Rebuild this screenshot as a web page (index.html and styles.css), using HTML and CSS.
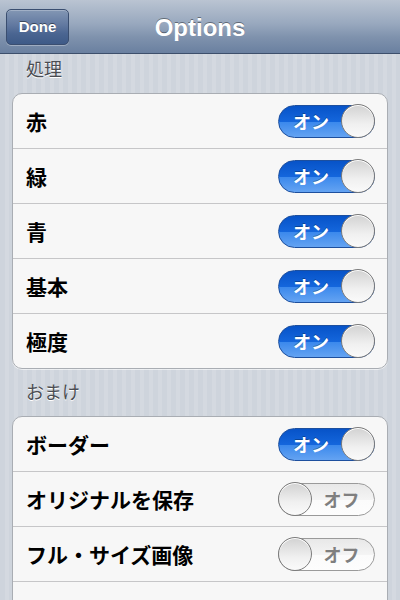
FILE: index.html
```html
<!DOCTYPE html>
<html lang="ja">
<head>
    <meta charset="UTF-8">
    <meta name="viewport" content="width=device-width, initial-scale=1.0">
    <title>Options</title>
    <link rel="stylesheet" href="styles.css">
</head>
<body>
    <header class="navbar">
        <div class="nav-left">
            <button class="nav-btn">Done</button>
        </div>
        <h1 class="nav-title">Options</h1>
        <div class="nav-right"></div>
    </header>

    <main class="settings">
        <section class="section">
            <h2 class="section-title">処理</h2>
            <ul class="group">
                <li class="row">
                    <span class="row-label">赤</span>
                    <span class="switch on"><span class="switch-text">オン</span><span class="knob"></span></span>
                </li>
                <li class="row">
                    <span class="row-label">緑</span>
                    <span class="switch on"><span class="switch-text">オン</span><span class="knob"></span></span>
                </li>
                <li class="row">
                    <span class="row-label">青</span>
                    <span class="switch on"><span class="switch-text">オン</span><span class="knob"></span></span>
                </li>
                <li class="row">
                    <span class="row-label">基本</span>
                    <span class="switch on"><span class="switch-text">オン</span><span class="knob"></span></span>
                </li>
                <li class="row">
                    <span class="row-label">極度</span>
                    <span class="switch on"><span class="switch-text">オン</span><span class="knob"></span></span>
                </li>
            </ul>
        </section>

        <section class="section">
            <h2 class="section-title">おまけ</h2>
            <ul class="group">
                <li class="row">
                    <span class="row-label">ボーダー</span>
                    <span class="switch on"><span class="switch-text">オン</span><span class="knob"></span></span>
                </li>
                <li class="row">
                    <span class="row-label">オリジナルを保存</span>
                    <span class="switch off"><span class="switch-text">オフ</span><span class="knob"></span></span>
                </li>
                <li class="row">
                    <span class="row-label">フル・サイズ画像</span>
                    <span class="switch off"><span class="switch-text">オフ</span><span class="knob"></span></span>
                </li>
                <li class="row">
                    <span class="row-label">その他のアプリ</span>
                </li>
            </ul>
        </section>
    </main>
</body>
</html>
```

FILE: styles.css
```css
body, html {
    margin: 0;
    height: 100%;
    overflow: hidden;
    font-family: "Liberation Sans", "Noto Sans CJK JP", sans-serif;
    background-color: #d0d5dd;
    background-image: repeating-linear-gradient(90deg, #ced4dc 0, #ced4dc 5px, #d4d9e0 5px, #d4d9e0 9px);
}

/* ナビゲーションバー */
.navbar {
    display: grid;
    grid-template-columns: 1fr auto 1fr;
    align-items: center;
    height: 53px;
    padding: 0 6px;
    border-bottom: 1px solid #3d4f6b;
    background: linear-gradient(#bac4d2 0%, #98a8be 45%, #7f92ad 70%, #6a80a0 100%);
}
.nav-btn {
    width: 63px;
    height: 36px;
    padding: 0;
    font-family: inherit;
    font-size: 15px;
    font-weight: bold;
    color: #fff;
    text-shadow: 0 -1px 0 rgba(0, 0, 0, 0.45);
    border: 1px solid #3a4e70;
    border-radius: 5px;
    background: linear-gradient(#8397b4 0%, #6178a0 45%, #4a6591 70%, #3e5a87 100%);
    box-shadow: 0 1px 0 rgba(255, 255, 255, 0.3), inset 0 1px 0 rgba(255, 255, 255, 0.25);
}
.nav-title {
    margin: 3px 0 0;
    font-size: 24px;
    font-weight: bold;
    color: #fff;
    text-shadow: 0 -1px 0 rgba(0, 0, 0, 0.4);
}

/* 設定グループ */
.settings {
    padding: 0 12px;
}
.section + .section {
    margin-top: 8px;
}
.section-title {
    margin: 0;
    padding: 2px 14px 9px;
    line-height: 28px;
    font-size: 18px;
    font-weight: normal;
    color: #4a4c52;
    text-shadow: 0 1px 0 #fff;
}
.group {
    list-style: none;
    margin: 0;
    padding: 0;
    background: #f7f7f7;
    border: 1px solid #a9adb3;
    border-radius: 10px;
    box-shadow: 0 1px 0 rgba(255, 255, 255, 0.6);
}
.row {
    display: flex;
    align-items: center;
    justify-content: space-between;
    height: 54px;
    padding: 0 12px 0 13px;
}
.row + .row {
    border-top: 1px solid #c6c6c8;
}
.row-label {
    font-size: 21px;
    font-weight: bold;
    color: #000;
}

/* スイッチ */
.switch {
    display: flex;
    align-items: center;
    box-sizing: border-box;
    width: 97px;
    height: 33px;
    border-radius: 17px;
    border: 1px solid #9a9a9a;
}
.switch.on {
    border-color: #1d4f9e;
    background: linear-gradient(#0753c8 0%, #1466dc 50%, #3a88ec 51%, #64a3f2 100%);
}
.switch.off {
    flex-direction: row-reverse;
    background: linear-gradient(#e8e8e8 0%, #f4f4f4 50%, #fbfbfb 51%, #fdfdfd 100%);
}
.switch-text {
    flex: 1;
    text-align: center;
    font-size: 18px;
    font-weight: bold;
}
.on .switch-text {
    padding-left: 1px;
    color: #fff;
    text-shadow: 0 -1px 0 rgba(0, 0, 0, 0.3);
}
.off .switch-text {
    padding-right: 2px;
    color: #7f7f7f;
}
.knob {
    box-sizing: border-box;
    width: 34px;
    height: 34px;
    margin: 0 -1px;
    border-radius: 50%;
    border: 1px solid #7c7c7c;
    background: linear-gradient(#d2d2d2 0%, #f0f0f0 60%, #fafafa 100%);
    box-shadow: inset 0 1px 0 #fff;
}
```
